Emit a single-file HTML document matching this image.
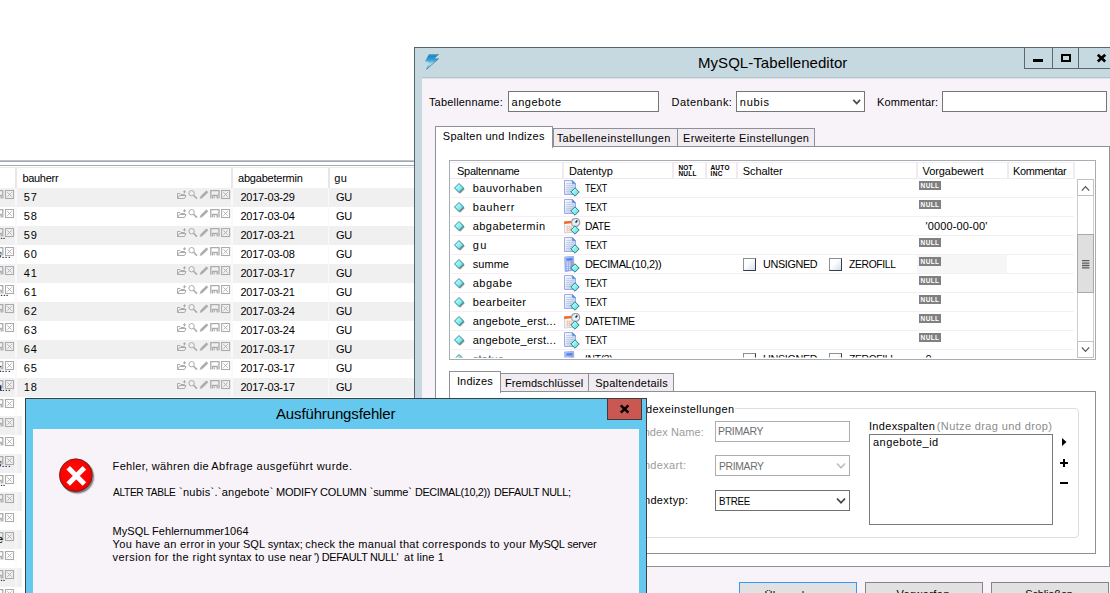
<!DOCTYPE html>
<html lang="de"><head><meta charset="utf-8"><title>MySQL-Tabelleneditor</title>
<style>
html,body{margin:0;padding:0}
body{width:1110px;height:593px;overflow:hidden;background:#fff;position:relative;font:11px "Liberation Sans",sans-serif;color:#000}
div,span,svg{position:absolute;box-sizing:border-box}
.layer{left:0;top:0;width:1110px;height:593px}
.t{white-space:pre;line-height:14px;transform-origin:0 50%;font-family:"Liberation Sans",sans-serif;font-size:11px}
.row{left:0;width:414px;height:18.5px;background:#f0f0f0}
.vsep{width:1.5px;background:#fbf7fa}
.win{background:#c7d9e0;border:1px solid #55646b}
.client{background:#f8f3f8}
.inp{background:#fff;border:1px solid #767676}
.tab{background:#f1ecf1;border:1px solid #8d9096;border-bottom:none}
.tab.act{background:#fff}
.hsep{width:2px;background:#f1ebf0;top:162px;height:17px}
.rsep{left:451px;width:623px;height:1px;background:#f6eef3}
.null{width:22px;height:9px;background:#808080;color:#fff;font-size:6.5px;font-weight:700;line-height:9px;text-align:center;letter-spacing:0.4px;font-family:"Liberation Sans",sans-serif}
.cb{width:13px;height:13px;border:1px solid #1c5180;border-top-color:#8e8f8f;border-left-color:#8e8f8f;border-right-color:#3c3c3c;border-bottom-color:#3c3c3c;background:linear-gradient(135deg,#fdfdfd 40%,#cfe0f4)}
.btn{background:#e1e1e1;border:1px solid #858585;height:20px}
</style></head>
<body>
<svg style="left:0;top:0" width="0" height="0"><defs><linearGradient id="dm" x1="0" y1="0" x2="1" y2="1"><stop offset="0" stop-color="#e4ffff"/><stop offset=".45" stop-color="#8ff3f6"/><stop offset="1" stop-color="#45d4e0"/></linearGradient><linearGradient id="dg" x1="0" y1="0" x2="1" y2="1"><stop offset="0" stop-color="#fbfcff"/><stop offset=".5" stop-color="#d5e4f6"/><stop offset="1" stop-color="#9cc0ea"/></linearGradient><linearGradient id="cg" x1="0" y1="0" x2="1" y2="1"><stop offset="0" stop-color="#bcd0fa"/><stop offset="1" stop-color="#6a8ce4"/></linearGradient><linearGradient id="lg" x1="0" y1="0" x2="0" y2="1"><stop offset="0" stop-color="#5fb0d8"/><stop offset=".12" stop-color="#1f86ba"/><stop offset=".4" stop-color="#3aa3d4"/><stop offset=".65" stop-color="#a6e3f7"/><stop offset="1" stop-color="#2d93c6"/></linearGradient><radialGradient id="rg" cx=".45" cy=".4" r=".62"><stop offset="0" stop-color="#ff0d08"/><stop offset=".85" stop-color="#f80000"/><stop offset="1" stop-color="#d80000"/></radialGradient></defs></svg>
<div class="layer" id="left">
<div style="left:0;top:160px;width:414px;height:1px;background:#bcc3cb"></div><div style="left:0;top:161px;width:414px;height:1px;background:#a2a9b2"></div><div style="left:0;top:165px;width:414px;height:1px;background:#a6acb4"></div><div style="left:0;top:167px;width:414px;height:1px;background:#ececec"></div><div style="left:15px;top:168px;width:2px;height:20px;background:#e8e4e8"></div><div style="left:231px;top:168px;width:2px;height:20px;background:#e8e4e8"></div><div style="left:327.5px;top:168px;width:2px;height:20px;background:#e8e4e8"></div><div style="left:0;top:187.5px;width:414px;height:1px;background:#e9e4e8"></div>
<div class="row" style="top:188.4px;width:414px"></div><div class="row" style="top:226.4px;width:414px"></div><div class="row" style="top:264.4px;width:414px"></div><div class="row" style="top:302.4px;width:414px"></div><div class="row" style="top:340.4px;width:414px"></div><div class="row" style="top:378.4px;width:414px"></div><div class="row" style="top:416.4px;width:21.5px"></div><div class="row" style="top:454.4px;width:21.5px"></div><div class="row" style="top:492.4px;width:21.5px"></div><div class="row" style="top:530.4px;width:21.5px"></div><div class="row" style="top:568.4px;width:21.5px"></div><div class="vsep" style="left:15px;top:188px;height:210px"></div><div class="vsep" style="left:231px;top:188px;height:210px"></div><div class="vsep" style="left:327.5px;top:188px;height:210px"></div><div class="vsep" style="left:15px;top:398px;height:195px;opacity:.5"></div>
<svg style="left:0;top:190.3px" width="16" height="10" viewBox="0 0 16 10" fill="none" stroke="#ababab" stroke-width="1"><path d="M-4.4 8.5V.5H2.8V8.5 M-2.6 8.5V5.5H1.2V8.5" stroke-width="1.3"/><rect x="5.5" y=".5" width="8" height="8" stroke-width="1.1"/><path d="M7.3 2.3L11.7 6.7M11.7 2.3L7.3 6.7" stroke-width=".9"/></svg><svg style="left:176.6px;top:190.3px" width="54" height="10" viewBox="0 0 54 10" fill="none" stroke="#ababab" stroke-width="1"><path d="M.5 8.5V3.5H3L4 4.5H7.5V5.5M.5 8.5L2.5 5.5H9L7.5 8.5Z M6 1.8H9 M7.5 .3V3.3"/><circle cx="14.6" cy="3.2" r="2.7"/><path d="M16.6 5.2L20 8.6" stroke-width="1.6"/><path d="M23 8.6L24 6L29.5 .8L31 2.3L25.6 7.6Z" fill="#ababab" stroke-width=".6"/><path d="M33.8 8.5V.5H42V8.5 M35.6 8.5V5.5H40.2V8.5 M37 7.5H38" stroke-width="1.3"/><rect x="44.6" y=".5" width="8" height="8" stroke-width="1.1"/><path d="M46.4 2.3L50.8 6.7M50.8 2.3L46.4 6.7" stroke-width=".9"/></svg>
<svg style="left:0;top:209.3px" width="16" height="10" viewBox="0 0 16 10" fill="none" stroke="#ababab" stroke-width="1"><path d="M-4.4 8.5V.5H2.8V8.5 M-2.6 8.5V5.5H1.2V8.5" stroke-width="1.3"/><rect x="5.5" y=".5" width="8" height="8" stroke-width="1.1"/><path d="M7.3 2.3L11.7 6.7M11.7 2.3L7.3 6.7" stroke-width=".9"/></svg><svg style="left:176.6px;top:209.3px" width="54" height="10" viewBox="0 0 54 10" fill="none" stroke="#ababab" stroke-width="1"><path d="M.5 8.5V3.5H3L4 4.5H7.5V5.5M.5 8.5L2.5 5.5H9L7.5 8.5Z M6 1.8H9 M7.5 .3V3.3"/><circle cx="14.6" cy="3.2" r="2.7"/><path d="M16.6 5.2L20 8.6" stroke-width="1.6"/><path d="M23 8.6L24 6L29.5 .8L31 2.3L25.6 7.6Z" fill="#ababab" stroke-width=".6"/><path d="M33.8 8.5V.5H42V8.5 M35.6 8.5V5.5H40.2V8.5 M37 7.5H38" stroke-width="1.3"/><rect x="44.6" y=".5" width="8" height="8" stroke-width="1.1"/><path d="M46.4 2.3L50.8 6.7M50.8 2.3L46.4 6.7" stroke-width=".9"/></svg>
<svg style="left:0;top:228.3px" width="16" height="10" viewBox="0 0 16 10" fill="none" stroke="#ababab" stroke-width="1"><path d="M-4.4 8.5V.5H2.8V8.5 M-2.6 8.5V5.5H1.2V8.5" stroke-width="1.3"/><rect x="5.5" y=".5" width="8" height="8" stroke-width="1.1"/><path d="M7.3 2.3L11.7 6.7M11.7 2.3L7.3 6.7" stroke-width=".9"/></svg><svg style="left:176.6px;top:228.3px" width="54" height="10" viewBox="0 0 54 10" fill="none" stroke="#ababab" stroke-width="1"><path d="M.5 8.5V3.5H3L4 4.5H7.5V5.5M.5 8.5L2.5 5.5H9L7.5 8.5Z M6 1.8H9 M7.5 .3V3.3"/><circle cx="14.6" cy="3.2" r="2.7"/><path d="M16.6 5.2L20 8.6" stroke-width="1.6"/><path d="M23 8.6L24 6L29.5 .8L31 2.3L25.6 7.6Z" fill="#ababab" stroke-width=".6"/><path d="M33.8 8.5V.5H42V8.5 M35.6 8.5V5.5H40.2V8.5 M37 7.5H38" stroke-width="1.3"/><rect x="44.6" y=".5" width="8" height="8" stroke-width="1.1"/><path d="M46.4 2.3L50.8 6.7M50.8 2.3L46.4 6.7" stroke-width=".9"/></svg>
<svg style="left:0;top:247.3px" width="16" height="10" viewBox="0 0 16 10" fill="none" stroke="#ababab" stroke-width="1"><path d="M-4.4 8.5V.5H2.8V8.5 M-2.6 8.5V5.5H1.2V8.5" stroke-width="1.3"/><rect x="5.5" y=".5" width="8" height="8" stroke-width="1.1"/><path d="M7.3 2.3L11.7 6.7M11.7 2.3L7.3 6.7" stroke-width=".9"/></svg><svg style="left:176.6px;top:247.3px" width="54" height="10" viewBox="0 0 54 10" fill="none" stroke="#ababab" stroke-width="1"><path d="M.5 8.5V3.5H3L4 4.5H7.5V5.5M.5 8.5L2.5 5.5H9L7.5 8.5Z M6 1.8H9 M7.5 .3V3.3"/><circle cx="14.6" cy="3.2" r="2.7"/><path d="M16.6 5.2L20 8.6" stroke-width="1.6"/><path d="M23 8.6L24 6L29.5 .8L31 2.3L25.6 7.6Z" fill="#ababab" stroke-width=".6"/><path d="M33.8 8.5V.5H42V8.5 M35.6 8.5V5.5H40.2V8.5 M37 7.5H38" stroke-width="1.3"/><rect x="44.6" y=".5" width="8" height="8" stroke-width="1.1"/><path d="M46.4 2.3L50.8 6.7M50.8 2.3L46.4 6.7" stroke-width=".9"/></svg>
<svg style="left:0;top:266.3px" width="16" height="10" viewBox="0 0 16 10" fill="none" stroke="#ababab" stroke-width="1"><path d="M-4.4 8.5V.5H2.8V8.5 M-2.6 8.5V5.5H1.2V8.5" stroke-width="1.3"/><rect x="5.5" y=".5" width="8" height="8" stroke-width="1.1"/><path d="M7.3 2.3L11.7 6.7M11.7 2.3L7.3 6.7" stroke-width=".9"/></svg><svg style="left:176.6px;top:266.3px" width="54" height="10" viewBox="0 0 54 10" fill="none" stroke="#ababab" stroke-width="1"><path d="M.5 8.5V3.5H3L4 4.5H7.5V5.5M.5 8.5L2.5 5.5H9L7.5 8.5Z M6 1.8H9 M7.5 .3V3.3"/><circle cx="14.6" cy="3.2" r="2.7"/><path d="M16.6 5.2L20 8.6" stroke-width="1.6"/><path d="M23 8.6L24 6L29.5 .8L31 2.3L25.6 7.6Z" fill="#ababab" stroke-width=".6"/><path d="M33.8 8.5V.5H42V8.5 M35.6 8.5V5.5H40.2V8.5 M37 7.5H38" stroke-width="1.3"/><rect x="44.6" y=".5" width="8" height="8" stroke-width="1.1"/><path d="M46.4 2.3L50.8 6.7M50.8 2.3L46.4 6.7" stroke-width=".9"/></svg>
<svg style="left:0;top:285.3px" width="16" height="10" viewBox="0 0 16 10" fill="none" stroke="#ababab" stroke-width="1"><path d="M-4.4 8.5V.5H2.8V8.5 M-2.6 8.5V5.5H1.2V8.5" stroke-width="1.3"/><rect x="5.5" y=".5" width="8" height="8" stroke-width="1.1"/><path d="M7.3 2.3L11.7 6.7M11.7 2.3L7.3 6.7" stroke-width=".9"/></svg><svg style="left:176.6px;top:285.3px" width="54" height="10" viewBox="0 0 54 10" fill="none" stroke="#ababab" stroke-width="1"><path d="M.5 8.5V3.5H3L4 4.5H7.5V5.5M.5 8.5L2.5 5.5H9L7.5 8.5Z M6 1.8H9 M7.5 .3V3.3"/><circle cx="14.6" cy="3.2" r="2.7"/><path d="M16.6 5.2L20 8.6" stroke-width="1.6"/><path d="M23 8.6L24 6L29.5 .8L31 2.3L25.6 7.6Z" fill="#ababab" stroke-width=".6"/><path d="M33.8 8.5V.5H42V8.5 M35.6 8.5V5.5H40.2V8.5 M37 7.5H38" stroke-width="1.3"/><rect x="44.6" y=".5" width="8" height="8" stroke-width="1.1"/><path d="M46.4 2.3L50.8 6.7M50.8 2.3L46.4 6.7" stroke-width=".9"/></svg>
<svg style="left:0;top:304.3px" width="16" height="10" viewBox="0 0 16 10" fill="none" stroke="#ababab" stroke-width="1"><path d="M-4.4 8.5V.5H2.8V8.5 M-2.6 8.5V5.5H1.2V8.5" stroke-width="1.3"/><rect x="5.5" y=".5" width="8" height="8" stroke-width="1.1"/><path d="M7.3 2.3L11.7 6.7M11.7 2.3L7.3 6.7" stroke-width=".9"/></svg><svg style="left:176.6px;top:304.3px" width="54" height="10" viewBox="0 0 54 10" fill="none" stroke="#ababab" stroke-width="1"><path d="M.5 8.5V3.5H3L4 4.5H7.5V5.5M.5 8.5L2.5 5.5H9L7.5 8.5Z M6 1.8H9 M7.5 .3V3.3"/><circle cx="14.6" cy="3.2" r="2.7"/><path d="M16.6 5.2L20 8.6" stroke-width="1.6"/><path d="M23 8.6L24 6L29.5 .8L31 2.3L25.6 7.6Z" fill="#ababab" stroke-width=".6"/><path d="M33.8 8.5V.5H42V8.5 M35.6 8.5V5.5H40.2V8.5 M37 7.5H38" stroke-width="1.3"/><rect x="44.6" y=".5" width="8" height="8" stroke-width="1.1"/><path d="M46.4 2.3L50.8 6.7M50.8 2.3L46.4 6.7" stroke-width=".9"/></svg>
<svg style="left:0;top:323.3px" width="16" height="10" viewBox="0 0 16 10" fill="none" stroke="#ababab" stroke-width="1"><path d="M-4.4 8.5V.5H2.8V8.5 M-2.6 8.5V5.5H1.2V8.5" stroke-width="1.3"/><rect x="5.5" y=".5" width="8" height="8" stroke-width="1.1"/><path d="M7.3 2.3L11.7 6.7M11.7 2.3L7.3 6.7" stroke-width=".9"/></svg><svg style="left:176.6px;top:323.3px" width="54" height="10" viewBox="0 0 54 10" fill="none" stroke="#ababab" stroke-width="1"><path d="M.5 8.5V3.5H3L4 4.5H7.5V5.5M.5 8.5L2.5 5.5H9L7.5 8.5Z M6 1.8H9 M7.5 .3V3.3"/><circle cx="14.6" cy="3.2" r="2.7"/><path d="M16.6 5.2L20 8.6" stroke-width="1.6"/><path d="M23 8.6L24 6L29.5 .8L31 2.3L25.6 7.6Z" fill="#ababab" stroke-width=".6"/><path d="M33.8 8.5V.5H42V8.5 M35.6 8.5V5.5H40.2V8.5 M37 7.5H38" stroke-width="1.3"/><rect x="44.6" y=".5" width="8" height="8" stroke-width="1.1"/><path d="M46.4 2.3L50.8 6.7M50.8 2.3L46.4 6.7" stroke-width=".9"/></svg>
<svg style="left:0;top:342.3px" width="16" height="10" viewBox="0 0 16 10" fill="none" stroke="#ababab" stroke-width="1"><path d="M-4.4 8.5V.5H2.8V8.5 M-2.6 8.5V5.5H1.2V8.5" stroke-width="1.3"/><rect x="5.5" y=".5" width="8" height="8" stroke-width="1.1"/><path d="M7.3 2.3L11.7 6.7M11.7 2.3L7.3 6.7" stroke-width=".9"/></svg><svg style="left:176.6px;top:342.3px" width="54" height="10" viewBox="0 0 54 10" fill="none" stroke="#ababab" stroke-width="1"><path d="M.5 8.5V3.5H3L4 4.5H7.5V5.5M.5 8.5L2.5 5.5H9L7.5 8.5Z M6 1.8H9 M7.5 .3V3.3"/><circle cx="14.6" cy="3.2" r="2.7"/><path d="M16.6 5.2L20 8.6" stroke-width="1.6"/><path d="M23 8.6L24 6L29.5 .8L31 2.3L25.6 7.6Z" fill="#ababab" stroke-width=".6"/><path d="M33.8 8.5V.5H42V8.5 M35.6 8.5V5.5H40.2V8.5 M37 7.5H38" stroke-width="1.3"/><rect x="44.6" y=".5" width="8" height="8" stroke-width="1.1"/><path d="M46.4 2.3L50.8 6.7M50.8 2.3L46.4 6.7" stroke-width=".9"/></svg>
<svg style="left:0;top:361.3px" width="16" height="10" viewBox="0 0 16 10" fill="none" stroke="#ababab" stroke-width="1"><path d="M-4.4 8.5V.5H2.8V8.5 M-2.6 8.5V5.5H1.2V8.5" stroke-width="1.3"/><rect x="5.5" y=".5" width="8" height="8" stroke-width="1.1"/><path d="M7.3 2.3L11.7 6.7M11.7 2.3L7.3 6.7" stroke-width=".9"/></svg><svg style="left:176.6px;top:361.3px" width="54" height="10" viewBox="0 0 54 10" fill="none" stroke="#ababab" stroke-width="1"><path d="M.5 8.5V3.5H3L4 4.5H7.5V5.5M.5 8.5L2.5 5.5H9L7.5 8.5Z M6 1.8H9 M7.5 .3V3.3"/><circle cx="14.6" cy="3.2" r="2.7"/><path d="M16.6 5.2L20 8.6" stroke-width="1.6"/><path d="M23 8.6L24 6L29.5 .8L31 2.3L25.6 7.6Z" fill="#ababab" stroke-width=".6"/><path d="M33.8 8.5V.5H42V8.5 M35.6 8.5V5.5H40.2V8.5 M37 7.5H38" stroke-width="1.3"/><rect x="44.6" y=".5" width="8" height="8" stroke-width="1.1"/><path d="M46.4 2.3L50.8 6.7M50.8 2.3L46.4 6.7" stroke-width=".9"/></svg>
<svg style="left:0;top:380.3px" width="16" height="10" viewBox="0 0 16 10" fill="none" stroke="#ababab" stroke-width="1"><path d="M-4.4 8.5V.5H2.8V8.5 M-2.6 8.5V5.5H1.2V8.5" stroke-width="1.3"/><rect x="5.5" y=".5" width="8" height="8" stroke-width="1.1"/><path d="M7.3 2.3L11.7 6.7M11.7 2.3L7.3 6.7" stroke-width=".9"/></svg><svg style="left:176.6px;top:380.3px" width="54" height="10" viewBox="0 0 54 10" fill="none" stroke="#ababab" stroke-width="1"><path d="M.5 8.5V3.5H3L4 4.5H7.5V5.5M.5 8.5L2.5 5.5H9L7.5 8.5Z M6 1.8H9 M7.5 .3V3.3"/><circle cx="14.6" cy="3.2" r="2.7"/><path d="M16.6 5.2L20 8.6" stroke-width="1.6"/><path d="M23 8.6L24 6L29.5 .8L31 2.3L25.6 7.6Z" fill="#ababab" stroke-width=".6"/><path d="M33.8 8.5V.5H42V8.5 M35.6 8.5V5.5H40.2V8.5 M37 7.5H38" stroke-width="1.3"/><rect x="44.6" y=".5" width="8" height="8" stroke-width="1.1"/><path d="M46.4 2.3L50.8 6.7M50.8 2.3L46.4 6.7" stroke-width=".9"/></svg>
<svg style="left:0;top:399.3px" width="16" height="10" viewBox="0 0 16 10" fill="none" stroke="#ababab" stroke-width="1"><path d="M-4.4 8.5V.5H2.8V8.5 M-2.6 8.5V5.5H1.2V8.5" stroke-width="1.3"/><rect x="5.5" y=".5" width="8" height="8" stroke-width="1.1"/><path d="M7.3 2.3L11.7 6.7M11.7 2.3L7.3 6.7" stroke-width=".9"/></svg>
<svg style="left:0;top:418.3px" width="16" height="10" viewBox="0 0 16 10" fill="none" stroke="#ababab" stroke-width="1"><path d="M-4.4 8.5V.5H2.8V8.5 M-2.6 8.5V5.5H1.2V8.5" stroke-width="1.3"/><rect x="5.5" y=".5" width="8" height="8" stroke-width="1.1"/><path d="M7.3 2.3L11.7 6.7M11.7 2.3L7.3 6.7" stroke-width=".9"/></svg>
<svg style="left:0;top:437.3px" width="16" height="10" viewBox="0 0 16 10" fill="none" stroke="#ababab" stroke-width="1"><path d="M-4.4 8.5V.5H2.8V8.5 M-2.6 8.5V5.5H1.2V8.5" stroke-width="1.3"/><rect x="5.5" y=".5" width="8" height="8" stroke-width="1.1"/><path d="M7.3 2.3L11.7 6.7M11.7 2.3L7.3 6.7" stroke-width=".9"/></svg>
<svg style="left:0;top:456.3px" width="16" height="10" viewBox="0 0 16 10" fill="none" stroke="#ababab" stroke-width="1"><path d="M-4.4 8.5V.5H2.8V8.5 M-2.6 8.5V5.5H1.2V8.5" stroke-width="1.3"/><rect x="5.5" y=".5" width="8" height="8" stroke-width="1.1"/><path d="M7.3 2.3L11.7 6.7M11.7 2.3L7.3 6.7" stroke-width=".9"/></svg>
<svg style="left:0;top:475.3px" width="16" height="10" viewBox="0 0 16 10" fill="none" stroke="#ababab" stroke-width="1"><path d="M-4.4 8.5V.5H2.8V8.5 M-2.6 8.5V5.5H1.2V8.5" stroke-width="1.3"/><rect x="5.5" y=".5" width="8" height="8" stroke-width="1.1"/><path d="M7.3 2.3L11.7 6.7M11.7 2.3L7.3 6.7" stroke-width=".9"/></svg>
<svg style="left:0;top:494.3px" width="16" height="10" viewBox="0 0 16 10" fill="none" stroke="#ababab" stroke-width="1"><path d="M-4.4 8.5V.5H2.8V8.5 M-2.6 8.5V5.5H1.2V8.5" stroke-width="1.3"/><rect x="5.5" y=".5" width="8" height="8" stroke-width="1.1"/><path d="M7.3 2.3L11.7 6.7M11.7 2.3L7.3 6.7" stroke-width=".9"/></svg>
<svg style="left:0;top:513.3px" width="16" height="10" viewBox="0 0 16 10" fill="none" stroke="#ababab" stroke-width="1"><path d="M-4.4 8.5V.5H2.8V8.5 M-2.6 8.5V5.5H1.2V8.5" stroke-width="1.3"/><rect x="5.5" y=".5" width="8" height="8" stroke-width="1.1"/><path d="M7.3 2.3L11.7 6.7M11.7 2.3L7.3 6.7" stroke-width=".9"/></svg>
<svg style="left:0;top:532.3px" width="16" height="10" viewBox="0 0 16 10" fill="none" stroke="#ababab" stroke-width="1"><path d="M-4.4 8.5V.5H2.8V8.5 M-2.6 8.5V5.5H1.2V8.5" stroke-width="1.3"/><rect x="5.5" y=".5" width="8" height="8" stroke-width="1.1"/><path d="M7.3 2.3L11.7 6.7M11.7 2.3L7.3 6.7" stroke-width=".9"/></svg>
<svg style="left:0;top:551.3px" width="16" height="10" viewBox="0 0 16 10" fill="none" stroke="#ababab" stroke-width="1"><path d="M-4.4 8.5V.5H2.8V8.5 M-2.6 8.5V5.5H1.2V8.5" stroke-width="1.3"/><rect x="5.5" y=".5" width="8" height="8" stroke-width="1.1"/><path d="M7.3 2.3L11.7 6.7M11.7 2.3L7.3 6.7" stroke-width=".9"/></svg>
<svg style="left:0;top:570.3px" width="16" height="10" viewBox="0 0 16 10" fill="none" stroke="#ababab" stroke-width="1"><path d="M-4.4 8.5V.5H2.8V8.5 M-2.6 8.5V5.5H1.2V8.5" stroke-width="1.3"/><rect x="5.5" y=".5" width="8" height="8" stroke-width="1.1"/><path d="M7.3 2.3L11.7 6.7M11.7 2.3L7.3 6.7" stroke-width=".9"/></svg>
<svg style="left:0;top:589.3px" width="16" height="10" viewBox="0 0 16 10" fill="none" stroke="#ababab" stroke-width="1"><path d="M-4.4 8.5V.5H2.8V8.5 M-2.6 8.5V5.5H1.2V8.5" stroke-width="1.3"/><rect x="5.5" y=".5" width="8" height="8" stroke-width="1.1"/><path d="M7.3 2.3L11.7 6.7M11.7 2.3L7.3 6.7" stroke-width=".9"/></svg>
<span class="t" style="left:22.4px;top:171.0px;letter-spacing:-0.29px">bauherr</span><span class="t" style="left:238.1px;top:171.0px;letter-spacing:-0.23px">abgabetermin</span><span class="t" style="left:334.3px;top:171.0px;letter-spacing:0.45px">gu</span><span class="t" style="left:23.8px;top:190.0px;letter-spacing:0.85px">57</span><span class="t" style="left:240.4px;top:190.0px;letter-spacing:-0.21px">2017-03-29</span><span class="t" style="left:335.9px;top:190.0px;letter-spacing:-0.30px">GU</span><span class="t" style="left:23.8px;top:209.0px;letter-spacing:0.85px">58</span><span class="t" style="left:240.4px;top:209.0px;letter-spacing:-0.21px">2017-03-04</span><span class="t" style="left:335.9px;top:209.0px;letter-spacing:-0.30px">GU</span><span class="t" style="left:23.8px;top:228.0px;letter-spacing:0.85px">59</span><span class="t" style="left:240.4px;top:228.0px;letter-spacing:-0.21px">2017-03-21</span><span class="t" style="left:335.9px;top:228.0px;letter-spacing:-0.30px">GU</span><span class="t" style="left:23.8px;top:247.0px;letter-spacing:0.85px">60</span><span class="t" style="left:240.4px;top:247.0px;letter-spacing:-0.21px">2017-03-08</span><span class="t" style="left:335.9px;top:247.0px;letter-spacing:-0.30px">GU</span><span class="t" style="left:23.8px;top:266.0px;letter-spacing:0.85px">41</span><span class="t" style="left:240.4px;top:266.0px;letter-spacing:-0.21px">2017-03-17</span><span class="t" style="left:335.9px;top:266.0px;letter-spacing:-0.30px">GU</span><span class="t" style="left:23.8px;top:285.0px;letter-spacing:0.85px">61</span><span class="t" style="left:240.4px;top:285.0px;letter-spacing:-0.21px">2017-03-21</span><span class="t" style="left:335.9px;top:285.0px;letter-spacing:-0.30px">GU</span><span class="t" style="left:23.8px;top:304.0px;letter-spacing:0.85px">62</span><span class="t" style="left:240.4px;top:304.0px;letter-spacing:-0.21px">2017-03-24</span><span class="t" style="left:335.9px;top:304.0px;letter-spacing:-0.30px">GU</span><span class="t" style="left:23.8px;top:323.0px;letter-spacing:0.85px">63</span><span class="t" style="left:240.4px;top:323.0px;letter-spacing:-0.21px">2017-03-24</span><span class="t" style="left:335.9px;top:323.0px;letter-spacing:-0.30px">GU</span><span class="t" style="left:23.8px;top:342.0px;letter-spacing:0.85px">64</span><span class="t" style="left:240.4px;top:342.0px;letter-spacing:-0.21px">2017-03-17</span><span class="t" style="left:335.9px;top:342.0px;letter-spacing:-0.30px">GU</span><span class="t" style="left:23.8px;top:361.0px;letter-spacing:0.85px">65</span><span class="t" style="left:240.4px;top:361.0px;letter-spacing:-0.21px">2017-03-17</span><span class="t" style="left:335.9px;top:361.0px;letter-spacing:-0.30px">GU</span><span class="t" style="left:23.8px;top:380.0px;letter-spacing:0.85px">18</span><span class="t" style="left:240.4px;top:380.0px;letter-spacing:-0.21px">2017-03-17</span><span class="t" style="left:335.9px;top:380.0px;letter-spacing:-0.30px">GU</span><span class="t" style="left:0.0px;top:228.0px;letter-spacing:-0.35px;transform:scaleX(0.952)">..</span><span class="t" style="left:-4.2px;top:247.0px;letter-spacing:0.11px">s...</span><span class="t" style="left:0.0px;top:285.0px;letter-spacing:-0.34px">...</span><span class="t" style="left:-4.2px;top:361.0px;letter-spacing:0.11px">k...</span><span class="t" style="left:-4.2px;top:380.0px;letter-spacing:-0.10px">a...</span><span class="t" style="left:-4.2px;top:456.0px;letter-spacing:0.11px">s...</span><span class="t" style="left:0.0px;top:475.0px;letter-spacing:-0.35px;transform:scaleX(0.952)">..</span><span class="t" style="left:-3.0px;top:532.0px;letter-spacing:0.38px">e</span><span class="t" style="left:0.0px;top:570.0px;letter-spacing:-0.35px;transform:scaleX(0.952)">..</span>
</div>
<div class="layer" id="main">
<div class="win" style="left:414px;top:47px;width:720px;height:600px"></div><div class="client" style="left:422px;top:78px;width:700px;height:560px;border-top:1px solid #dde3e8"></div><div style="left:422px;top:77px;width:700px;height:1px;background:#b3c4cc"></div>
<svg style="left:424px;top:53px" width="17" height="18" viewBox="0 0 17 18"><path d="M5 1 L14.8 1 L10.3 5.2 L14.8 5.6 L2.2 16.6 L4.6 9 L1 8.6Z" fill="url(#lg)"/><path d="M14.8 1 L10.3 5.2 M14.8 5.6 L2.2 16.6" stroke="#34526e" stroke-width=".7" fill="none" opacity=".8"/></svg>
<div style="left:1024px;top:47px;width:29px;height:22px;border:1px solid #5c686e;background:#c7d9e0"></div><div style="left:1052px;top:47px;width:27px;height:22px;border:1px solid #5c686e;background:#c7d9e0"></div><div style="left:1078px;top:47px;width:50px;height:22px;border:1px solid #5c686e;background:#c7d9e0"></div><div style="left:1033px;top:59px;width:10px;height:3px;background:#000"></div><div style="left:1061px;top:54px;width:10px;height:8px;border:2px solid #000;border-top-width:2px"></div><svg style="left:1096px;top:53px" width="11" height="10" viewBox="0 0 11 10"><path d="M1.8 1.7L9.2 8.5M9.2 1.7L1.8 8.5" stroke="#000" stroke-width="2.7"/></svg>
<div class="inp" style="left:508px;top:91px;width:151px;height:21px"></div><div class="inp" style="left:736px;top:91px;width:129px;height:21px"></div><svg style="left:852px;top:98px" width="10" height="8" viewBox="0 0 10 8"><path d="M1.3 1.8L4.7 5.5L8.1 1.8" fill="none" stroke="#4a4a4a" stroke-width="1.7"/></svg><div class="inp" style="left:942px;top:91px;width:165px;height:21px"></div>
<div style="left:435px;top:146px;width:675px;height:421px;background:#fff;border:1px solid #8d9096"></div><div class="tab" style="left:553px;top:128px;width:125px;height:18px"></div><div class="tab" style="left:677px;top:128px;width:138px;height:18px"></div><div class="tab act" style="left:435px;top:126px;width:118px;height:22px"></div>
<div style="left:449px;top:160px;width:647px;height:200px;background:#fff;border:1px solid #a7abb3"></div><div style="left:450px;top:178px;width:624px;height:1px;background:#efe9ee"></div><div style="left:450px;top:162px;width:624px;height:1px;background:#f3eef2"></div><div class="hsep" style="left:562px"></div><div class="hsep" style="left:672px"></div><div class="hsep" style="left:704.5px"></div><div class="hsep" style="left:736px"></div><div class="hsep" style="left:916px"></div><div class="hsep" style="left:1006.5px"></div><div class="hsep" style="left:1073px"></div>
<div class="layer" id="grid" style="clip-path:inset(161px 33px 235.5px 450px)">
<div style="left:917px;top:255px;width:90px;height:18px;background:#f6f6f6"></div><svg style="left:453.2px;top:181.6px" width="13" height="13" viewBox="0 0 13 13"><path d="M7.3 2.5 L12 7.2 L7.3 11.9 L2.6 7.2Z" fill="#555" opacity=".28"/><path d="M7 2.7 L11.3 7 L7 11.3 L2.7 7Z" fill="#3a3a3a" opacity=".5"/><path d="M6 1.5 L10.5 6 L6 10.5 L1.5 6Z" fill="url(#dm)" stroke="#3c8791" stroke-width="1"/></svg><svg style="left:564px;top:180px" width="17" height="17" viewBox="0 0 17 17"><path d="M.5 .5 H8.3 L11.5 3.6 V14.5 H.5Z" fill="url(#dg)" stroke="#a4a9e6" stroke-width="1"/><path d="M8.2 .4 L11.7 3.8 H8.2Z" fill="#4d8fe6" stroke="#6f8fdc" stroke-width=".5"/><path d="M2.2 3.5H7M2.2 5.5H9.6M2.2 7.5H9.6M2.2 9.5H8M2.2 11.5H7" stroke="#b4bfd6" stroke-width="1" opacity=".6"/></svg><svg style="left:569.1px;top:185.5px" width="13" height="13" viewBox="0 0 13 13"><path d="M6 1.8 L10.2 6 L6 10.2 L1.8 6Z" fill="url(#dm)" stroke="#357c7e" stroke-width="1"/></svg><div class="null" style="left:919px;top:181px">NULL</div>
<div class="rsep" style="top:197px"></div><svg style="left:453.2px;top:200.6px" width="13" height="13" viewBox="0 0 13 13"><path d="M7.3 2.5 L12 7.2 L7.3 11.9 L2.6 7.2Z" fill="#555" opacity=".28"/><path d="M7 2.7 L11.3 7 L7 11.3 L2.7 7Z" fill="#3a3a3a" opacity=".5"/><path d="M6 1.5 L10.5 6 L6 10.5 L1.5 6Z" fill="url(#dm)" stroke="#3c8791" stroke-width="1"/></svg><svg style="left:564px;top:199px" width="17" height="17" viewBox="0 0 17 17"><path d="M.5 .5 H8.3 L11.5 3.6 V14.5 H.5Z" fill="url(#dg)" stroke="#a4a9e6" stroke-width="1"/><path d="M8.2 .4 L11.7 3.8 H8.2Z" fill="#4d8fe6" stroke="#6f8fdc" stroke-width=".5"/><path d="M2.2 3.5H7M2.2 5.5H9.6M2.2 7.5H9.6M2.2 9.5H8M2.2 11.5H7" stroke="#b4bfd6" stroke-width="1" opacity=".6"/></svg><svg style="left:569.1px;top:204.5px" width="13" height="13" viewBox="0 0 13 13"><path d="M6 1.8 L10.2 6 L6 10.2 L1.8 6Z" fill="url(#dm)" stroke="#357c7e" stroke-width="1"/></svg><div class="null" style="left:919px;top:200px">NULL</div>
<div class="rsep" style="top:216px"></div><svg style="left:453.2px;top:219.6px" width="13" height="13" viewBox="0 0 13 13"><path d="M7.3 2.5 L12 7.2 L7.3 11.9 L2.6 7.2Z" fill="#555" opacity=".28"/><path d="M7 2.7 L11.3 7 L7 11.3 L2.7 7Z" fill="#3a3a3a" opacity=".5"/><path d="M6 1.5 L10.5 6 L6 10.5 L1.5 6Z" fill="url(#dm)" stroke="#3c8791" stroke-width="1"/></svg><svg style="left:564px;top:218px" width="17" height="17" viewBox="0 0 17 17"><path d="M.4 3.6 L9 3 L9.6 14.2 L.8 15Z" fill="#f3f7fd" stroke="#c3cbd8" stroke-width=".9"/><path d="M.2 3.6 L7 2.9 L7 5.3 L.3 6Z" fill="#f4661a"/><path d="M2.4 8.6H8M2.4 10.6H8M2.4 12.6H8M3.4 7.4V13.6M5.4 7.4V13.6M7.4 7.4V13.6" stroke="#f6c3a6" stroke-width=".9"/><circle cx="11.6" cy="4.4" r="4.1" fill="#e3eef8" stroke="#9a9ea6" stroke-width="1.2"/><path d="M11.6 4.6 L13.3 2.6" stroke="#23272e" stroke-width="1.5"/></svg><svg style="left:569.1px;top:223.5px" width="13" height="13" viewBox="0 0 13 13"><path d="M6 1.8 L10.2 6 L6 10.2 L1.8 6Z" fill="url(#dm)" stroke="#357c7e" stroke-width="1"/></svg>
<div class="rsep" style="top:235px"></div><svg style="left:453.2px;top:238.6px" width="13" height="13" viewBox="0 0 13 13"><path d="M7.3 2.5 L12 7.2 L7.3 11.9 L2.6 7.2Z" fill="#555" opacity=".28"/><path d="M7 2.7 L11.3 7 L7 11.3 L2.7 7Z" fill="#3a3a3a" opacity=".5"/><path d="M6 1.5 L10.5 6 L6 10.5 L1.5 6Z" fill="url(#dm)" stroke="#3c8791" stroke-width="1"/></svg><svg style="left:564px;top:237px" width="17" height="17" viewBox="0 0 17 17"><path d="M.5 .5 H8.3 L11.5 3.6 V14.5 H.5Z" fill="url(#dg)" stroke="#a4a9e6" stroke-width="1"/><path d="M8.2 .4 L11.7 3.8 H8.2Z" fill="#4d8fe6" stroke="#6f8fdc" stroke-width=".5"/><path d="M2.2 3.5H7M2.2 5.5H9.6M2.2 7.5H9.6M2.2 9.5H8M2.2 11.5H7" stroke="#b4bfd6" stroke-width="1" opacity=".6"/></svg><svg style="left:569.1px;top:242.5px" width="13" height="13" viewBox="0 0 13 13"><path d="M6 1.8 L10.2 6 L6 10.2 L1.8 6Z" fill="url(#dm)" stroke="#357c7e" stroke-width="1"/></svg><div class="null" style="left:919px;top:238px">NULL</div>
<div class="rsep" style="top:254px"></div><svg style="left:453.2px;top:257.6px" width="13" height="13" viewBox="0 0 13 13"><path d="M7.3 2.5 L12 7.2 L7.3 11.9 L2.6 7.2Z" fill="#555" opacity=".28"/><path d="M7 2.7 L11.3 7 L7 11.3 L2.7 7Z" fill="#3a3a3a" opacity=".5"/><path d="M6 1.5 L10.5 6 L6 10.5 L1.5 6Z" fill="url(#dm)" stroke="#3c8791" stroke-width="1"/></svg><svg style="left:564px;top:256px" width="17" height="17" viewBox="0 0 17 17"><path d="M.6 1 L9.6 .4 L9.9 14.2 L1.2 15.6Z" fill="url(#cg)" stroke="#8ea4e8" stroke-width=".8"/><path d="M2.3 2.6 L8.4 2.2 L8.4 4.2 L2.4 4.6Z" fill="#4d7be8"/><path d="M2.8 7H4.2M5 7H6.4M2.8 9.2H4.2M5 9.2H6.4M2.8 11.4H4.2M5 11.4H6.4M2.8 13.4H4.2M5 13.4H6.4" stroke="#dfe9fc" stroke-width="1.2"/><rect x="6.9" y="6" width="1.8" height="1.8" fill="#f08a48"/></svg><svg style="left:569.1px;top:261.5px" width="13" height="13" viewBox="0 0 13 13"><path d="M6 1.8 L10.2 6 L6 10.2 L1.8 6Z" fill="url(#dm)" stroke="#357c7e" stroke-width="1"/></svg><div class="null" style="left:919px;top:257px">NULL</div><div class="cb" style="left:743px;top:258px"></div><div class="cb" style="left:829px;top:258px"></div>
<div class="rsep" style="top:273px"></div><svg style="left:453.2px;top:276.6px" width="13" height="13" viewBox="0 0 13 13"><path d="M7.3 2.5 L12 7.2 L7.3 11.9 L2.6 7.2Z" fill="#555" opacity=".28"/><path d="M7 2.7 L11.3 7 L7 11.3 L2.7 7Z" fill="#3a3a3a" opacity=".5"/><path d="M6 1.5 L10.5 6 L6 10.5 L1.5 6Z" fill="url(#dm)" stroke="#3c8791" stroke-width="1"/></svg><svg style="left:564px;top:275px" width="17" height="17" viewBox="0 0 17 17"><path d="M.5 .5 H8.3 L11.5 3.6 V14.5 H.5Z" fill="url(#dg)" stroke="#a4a9e6" stroke-width="1"/><path d="M8.2 .4 L11.7 3.8 H8.2Z" fill="#4d8fe6" stroke="#6f8fdc" stroke-width=".5"/><path d="M2.2 3.5H7M2.2 5.5H9.6M2.2 7.5H9.6M2.2 9.5H8M2.2 11.5H7" stroke="#b4bfd6" stroke-width="1" opacity=".6"/></svg><svg style="left:569.1px;top:280.5px" width="13" height="13" viewBox="0 0 13 13"><path d="M6 1.8 L10.2 6 L6 10.2 L1.8 6Z" fill="url(#dm)" stroke="#357c7e" stroke-width="1"/></svg><div class="null" style="left:919px;top:276px">NULL</div>
<div class="rsep" style="top:292px"></div><svg style="left:453.2px;top:295.6px" width="13" height="13" viewBox="0 0 13 13"><path d="M7.3 2.5 L12 7.2 L7.3 11.9 L2.6 7.2Z" fill="#555" opacity=".28"/><path d="M7 2.7 L11.3 7 L7 11.3 L2.7 7Z" fill="#3a3a3a" opacity=".5"/><path d="M6 1.5 L10.5 6 L6 10.5 L1.5 6Z" fill="url(#dm)" stroke="#3c8791" stroke-width="1"/></svg><svg style="left:564px;top:294px" width="17" height="17" viewBox="0 0 17 17"><path d="M.5 .5 H8.3 L11.5 3.6 V14.5 H.5Z" fill="url(#dg)" stroke="#a4a9e6" stroke-width="1"/><path d="M8.2 .4 L11.7 3.8 H8.2Z" fill="#4d8fe6" stroke="#6f8fdc" stroke-width=".5"/><path d="M2.2 3.5H7M2.2 5.5H9.6M2.2 7.5H9.6M2.2 9.5H8M2.2 11.5H7" stroke="#b4bfd6" stroke-width="1" opacity=".6"/></svg><svg style="left:569.1px;top:299.5px" width="13" height="13" viewBox="0 0 13 13"><path d="M6 1.8 L10.2 6 L6 10.2 L1.8 6Z" fill="url(#dm)" stroke="#357c7e" stroke-width="1"/></svg><div class="null" style="left:919px;top:295px">NULL</div>
<div class="rsep" style="top:311px"></div><svg style="left:453.2px;top:314.6px" width="13" height="13" viewBox="0 0 13 13"><path d="M7.3 2.5 L12 7.2 L7.3 11.9 L2.6 7.2Z" fill="#555" opacity=".28"/><path d="M7 2.7 L11.3 7 L7 11.3 L2.7 7Z" fill="#3a3a3a" opacity=".5"/><path d="M6 1.5 L10.5 6 L6 10.5 L1.5 6Z" fill="url(#dm)" stroke="#3c8791" stroke-width="1"/></svg><svg style="left:564px;top:313px" width="17" height="17" viewBox="0 0 17 17"><path d="M.4 3.6 L9 3 L9.6 14.2 L.8 15Z" fill="#f3f7fd" stroke="#c3cbd8" stroke-width=".9"/><path d="M.2 3.6 L7 2.9 L7 5.3 L.3 6Z" fill="#f4661a"/><path d="M2.4 8.6H8M2.4 10.6H8M2.4 12.6H8M3.4 7.4V13.6M5.4 7.4V13.6M7.4 7.4V13.6" stroke="#f6c3a6" stroke-width=".9"/><circle cx="11.6" cy="4.4" r="4.1" fill="#e3eef8" stroke="#9a9ea6" stroke-width="1.2"/><path d="M11.6 4.6 L13.3 2.6" stroke="#23272e" stroke-width="1.5"/></svg><svg style="left:569.1px;top:318.5px" width="13" height="13" viewBox="0 0 13 13"><path d="M6 1.8 L10.2 6 L6 10.2 L1.8 6Z" fill="url(#dm)" stroke="#357c7e" stroke-width="1"/></svg><div class="null" style="left:919px;top:314px">NULL</div>
<div class="rsep" style="top:330px"></div><svg style="left:453.2px;top:333.6px" width="13" height="13" viewBox="0 0 13 13"><path d="M7.3 2.5 L12 7.2 L7.3 11.9 L2.6 7.2Z" fill="#555" opacity=".28"/><path d="M7 2.7 L11.3 7 L7 11.3 L2.7 7Z" fill="#3a3a3a" opacity=".5"/><path d="M6 1.5 L10.5 6 L6 10.5 L1.5 6Z" fill="url(#dm)" stroke="#3c8791" stroke-width="1"/></svg><svg style="left:564px;top:332px" width="17" height="17" viewBox="0 0 17 17"><path d="M.5 .5 H8.3 L11.5 3.6 V14.5 H.5Z" fill="url(#dg)" stroke="#a4a9e6" stroke-width="1"/><path d="M8.2 .4 L11.7 3.8 H8.2Z" fill="#4d8fe6" stroke="#6f8fdc" stroke-width=".5"/><path d="M2.2 3.5H7M2.2 5.5H9.6M2.2 7.5H9.6M2.2 9.5H8M2.2 11.5H7" stroke="#b4bfd6" stroke-width="1" opacity=".6"/></svg><svg style="left:569.1px;top:337.5px" width="13" height="13" viewBox="0 0 13 13"><path d="M6 1.8 L10.2 6 L6 10.2 L1.8 6Z" fill="url(#dm)" stroke="#357c7e" stroke-width="1"/></svg><div class="null" style="left:919px;top:333px">NULL</div>
<div class="rsep" style="top:349px"></div><svg style="left:453.2px;top:352.6px" width="13" height="13" viewBox="0 0 13 13"><path d="M7.3 2.5 L12 7.2 L7.3 11.9 L2.6 7.2Z" fill="#555" opacity=".28"/><path d="M7 2.7 L11.3 7 L7 11.3 L2.7 7Z" fill="#3a3a3a" opacity=".5"/><path d="M6 1.5 L10.5 6 L6 10.5 L1.5 6Z" fill="url(#dm)" stroke="#3c8791" stroke-width="1"/></svg><svg style="left:564px;top:351px" width="17" height="17" viewBox="0 0 17 17"><path d="M.6 1 L9.6 .4 L9.9 14.2 L1.2 15.6Z" fill="url(#cg)" stroke="#8ea4e8" stroke-width=".8"/><path d="M2.3 2.6 L8.4 2.2 L8.4 4.2 L2.4 4.6Z" fill="#4d7be8"/><path d="M2.8 7H4.2M5 7H6.4M2.8 9.2H4.2M5 9.2H6.4M2.8 11.4H4.2M5 11.4H6.4M2.8 13.4H4.2M5 13.4H6.4" stroke="#dfe9fc" stroke-width="1.2"/><rect x="6.9" y="6" width="1.8" height="1.8" fill="#f08a48"/></svg><svg style="left:569.1px;top:356.5px" width="13" height="13" viewBox="0 0 13 13"><path d="M6 1.8 L10.2 6 L6 10.2 L1.8 6Z" fill="url(#dm)" stroke="#357c7e" stroke-width="1"/></svg><div class="cb" style="left:743px;top:353px"></div><div class="cb" style="left:829px;top:353px"></div>
<span class="t" style="left:472.7px;top:181.0px;letter-spacing:0.51px">bauvorhaben</span><span class="t" style="left:584.9px;top:181.0px;letter-spacing:-0.35px;transform:scaleX(0.820)">TEXT</span><span class="t" style="left:472.7px;top:200.0px;letter-spacing:0.65px">bauherr</span><span class="t" style="left:584.9px;top:200.0px;letter-spacing:-0.35px;transform:scaleX(0.820)">TEXT</span><span class="t" style="left:472.7px;top:219.0px;letter-spacing:0.46px">abgabetermin</span><span class="t" style="left:584.9px;top:219.0px;letter-spacing:-0.35px;transform:scaleX(0.932)">DATE</span><span class="t" style="left:925.5px;top:218.5px;letter-spacing:0.12px">'0000-00-00'</span><span class="t" style="left:472.7px;top:238.0px;letter-spacing:1.55px">gu</span><span class="t" style="left:584.9px;top:238.0px;letter-spacing:-0.35px;transform:scaleX(0.820)">TEXT</span><span class="t" style="left:472.7px;top:257.0px;letter-spacing:0.06px">summe</span><span class="t" style="left:584.9px;top:257.0px;letter-spacing:-0.35px;transform:scaleX(0.998)">DECIMAL(10,2))</span><span class="t" style="left:763.0px;top:257.0px;letter-spacing:-0.35px;transform:scaleX(0.982)">UNSIGNED</span><span class="t" style="left:849.0px;top:257.0px;letter-spacing:-0.35px;transform:scaleX(0.938)">ZEROFILL</span><span class="t" style="left:472.7px;top:276.0px;letter-spacing:0.52px">abgabe</span><span class="t" style="left:584.9px;top:276.0px;letter-spacing:-0.35px;transform:scaleX(0.820)">TEXT</span><span class="t" style="left:472.7px;top:295.0px;letter-spacing:0.42px">bearbeiter</span><span class="t" style="left:584.9px;top:295.0px;letter-spacing:-0.35px;transform:scaleX(0.820)">TEXT</span><span class="t" style="left:472.7px;top:314.0px;letter-spacing:0.25px">angebote_erst...</span><span class="t" style="left:584.9px;top:314.0px;letter-spacing:-0.35px;transform:scaleX(0.957)">DATETIME</span><span class="t" style="left:472.7px;top:333.0px;letter-spacing:0.25px">angebote_erst...</span><span class="t" style="left:584.9px;top:333.0px;letter-spacing:-0.35px;transform:scaleX(0.820)">TEXT</span><span class="t" style="left:472.7px;top:352.0px;letter-spacing:0.29px">status</span><span class="t" style="left:584.9px;top:352.0px;letter-spacing:-0.35px;transform:scaleX(0.938)">INT(3)</span><span class="t" style="left:925.5px;top:352.0px;letter-spacing:0.88px">0</span><span class="t" style="left:763.0px;top:352.0px;letter-spacing:-0.35px;transform:scaleX(0.982)">UNSIGNED</span><span class="t" style="left:849.0px;top:352.0px;letter-spacing:-0.35px;transform:scaleX(0.938)">ZEROFILL</span>
</div>
<div style="left:1077px;top:179px;width:17px;height:179px;background:#fff;border-left:1px solid #cfcfcf;border-right:1px solid #cfcfcf"></div><div style="left:1077px;top:179px;width:17px;height:17px;background:#fff;border:1px solid #c2c2c2"></div><div style="left:1077px;top:341px;width:17px;height:17px;background:#fff;border:1px solid #c2c2c2"></div><div style="left:1077px;top:234px;width:17px;height:59px;background:#dfdfdf;border:1px solid #a9a9a9"></div><svg style="left:1081px;top:185px" width="9" height="7" viewBox="0 0 9 7"><path d="M.8 5.6L4.5 1.6L8.2 5.6" fill="none" stroke="#555" stroke-width="1.2"/></svg><svg style="left:1081px;top:346px" width="9" height="7" viewBox="0 0 9 7"><path d="M.8 1.4L4.5 5.4L8.2 1.4" fill="none" stroke="#555" stroke-width="1.2"/></svg><svg style="left:1082px;top:259px" width="8" height="10" viewBox="0 0 8 10"><path d="M0 1.7H7.4M0 4.1H7.4M0 6.5H7.4M0 8.9H7.4" stroke="#5a5a5a" stroke-width="1.3"/></svg>
<div style="left:449px;top:391px;width:647px;height:163px;background:#fff;border:1px solid #8d9096"></div><div class="tab" style="left:500px;top:373px;width:89px;height:18px"></div><div class="tab" style="left:588px;top:373px;width:86px;height:18px"></div><div class="tab act" style="left:449px;top:371px;width:52px;height:22px"></div>
<div style="left:628px;top:408px;width:451px;height:130px;border:1px solid #d5dfe5;border-radius:4px"></div><div style="left:630px;top:404px;width:105px;height:10px;background:#fff"></div><div class="inp" style="left:715px;top:421px;width:135px;height:21px;border-color:#abadb3"></div><div class="inp" style="left:715px;top:455px;width:135px;height:21px;border-color:#abadb3"></div><svg style="left:836px;top:462px" width="10" height="8" viewBox="0 0 10 8"><path d="M1 1.5L5 5.8L9 1.5" fill="none" stroke="#bdbdbd" stroke-width="1.6"/></svg><div class="inp" style="left:715px;top:490px;width:135px;height:21px;border-color:#707070"></div><svg style="left:836px;top:497px" width="10" height="8" viewBox="0 0 10 8"><path d="M1 1.5L5 5.8L9 1.5" fill="none" stroke="#444" stroke-width="1.8"/></svg><div class="inp" style="left:869px;top:434px;width:184px;height:91px;border-color:#7a7a7a"></div><svg style="left:1062px;top:438px" width="5" height="8" viewBox="0 0 5 8"><path d="M0 0L4.5 4L0 8Z" fill="#000"/></svg><div style="left:1060px;top:462px;width:8px;height:2px;background:#000"></div><div style="left:1063px;top:459px;width:2px;height:8px;background:#000"></div><div style="left:1060px;top:482px;width:8px;height:2px;background:#000"></div>
<div class="btn" style="left:739px;top:582px;width:118px;border-color:#3399ff"></div><div class="btn" style="left:865px;top:582px;width:118px"></div><div class="btn" style="left:991px;top:582px;width:118px"></div>
<span class="t" style="left:698.0px;top:56.0px;letter-spacing:0.05px;font-size:15px">MySQL-Tabelleneditor</span><span class="t" style="left:428.9px;top:95.0px;letter-spacing:0.19px">Tabellenname:</span><span class="t" style="left:511.5px;top:95.0px;letter-spacing:0.52px">angebote</span><span class="t" style="left:671.5px;top:95.0px;letter-spacing:0.46px">Datenbank:</span><span class="t" style="left:739.8px;top:95.0px;letter-spacing:0.73px">nubis</span><span class="t" style="left:877.0px;top:95.0px;letter-spacing:0.13px">Kommentar:</span><span class="t" style="left:442.8px;top:129.0px;letter-spacing:0.28px">Spalten und Indizes</span><span class="t" style="left:556.7px;top:131.0px;letter-spacing:0.40px">Tabelleneinstellungen</span><span class="t" style="left:683.0px;top:131.0px;letter-spacing:0.32px">Erweiterte Einstellungen</span><span class="t" style="left:456.9px;top:164.0px;letter-spacing:-0.20px">Spaltenname</span><span class="t" style="left:568.9px;top:164.0px;letter-spacing:-0.02px">Datentyp</span><span class="t" style="left:742.7px;top:164.0px;letter-spacing:-0.04px">Schalter</span><span class="t" style="left:922.5px;top:164.0px;letter-spacing:-0.07px">Vorgabewert</span><span class="t" style="left:1013.0px;top:164.0px;letter-spacing:-0.35px;transform:scaleX(0.992)">Kommentar</span><span class="t" style="left:678.4px;top:161.0px;letter-spacing:0.18px;font-size:6.5px;font-weight:700">NOT</span><span class="t" style="left:678.4px;top:167.0px;letter-spacing:0.25px;font-size:6.5px;font-weight:700">NULL</span><span class="t" style="left:710.4px;top:161.0px;letter-spacing:0.26px;font-size:6.5px;font-weight:700">AUTO</span><span class="t" style="left:710.4px;top:167.0px;letter-spacing:0.45px;font-size:6.5px;font-weight:700">INC</span><span class="t" style="left:456.9px;top:374.0px;letter-spacing:0.17px">Indizes</span><span class="t" style="left:504.9px;top:376.0px;letter-spacing:0.09px">Fremdschlüssel</span><span class="t" style="left:595.2px;top:376.0px;letter-spacing:0.27px">Spaltendetails</span><span class="t" style="left:635.5px;top:402.0px;letter-spacing:0.81px">In</span><span class="t" style="left:645.9px;top:402.0px;letter-spacing:0.37px">dexeinstellungen</span><span class="t" style="left:640.5px;top:425.0px;letter-spacing:0.10px;color:#9c9c9c">Index Name:</span><span class="t" style="left:718.0px;top:424.0px;letter-spacing:-0.35px;transform:scaleX(0.949);color:#6d6d6d">PRIMARY</span><span class="t" style="left:640.5px;top:458.0px;letter-spacing:0.34px;color:#9c9c9c">Indexart:</span><span class="t" style="left:719.0px;top:458.5px;letter-spacing:-0.35px;transform:scaleX(0.941);color:#6d6d6d">PRIMARY</span><span class="t" style="left:640.5px;top:493.0px;letter-spacing:0.36px">Indextyp:</span><span class="t" style="left:719.0px;top:493.5px;letter-spacing:-0.35px;transform:scaleX(0.887)">BTREE</span><span class="t" style="left:869.0px;top:419.0px;letter-spacing:0.31px">Indexspalten</span><span class="t" style="left:936.8px;top:419.0px;letter-spacing:0.37px;color:#8c8c8c">(Nutze drag und drop)</span><span class="t" style="left:873.0px;top:435.0px;letter-spacing:0.46px">angebote_id</span><span class="t" style="left:764.6px;top:587.5px;letter-spacing:0.18px">Übernehmen</span><span class="t" style="left:896.4px;top:587.0px;letter-spacing:0.45px">Verwerfen</span><span class="t" style="left:1025.2px;top:587.0px;letter-spacing:-0.14px">Schließen</span>
</div>
<div class="layer" id="err">
<div style="left:25px;top:398px;width:622px;height:220px;background:#65c9ef;border:1px solid #3d3f40"></div><div class="client" style="left:33px;top:429px;width:606px;height:180px"></div><div style="left:607px;top:399px;width:35px;height:21px;background:#c95852;border:1px solid #43393a;border-top:none"></div><svg style="left:619px;top:404px" width="11" height="10" viewBox="0 0 11 10"><path d="M1.8 1.4L9.4 8.6M9.4 1.4L1.8 8.6" stroke="#000" stroke-width="2.6"/></svg><svg style="left:57px;top:456px" width="40" height="40" viewBox="0 0 40 40"><circle cx="20.6" cy="21.2" r="17.2" fill="#555" opacity=".22"/><circle cx="20" cy="20.5" r="16.8" fill="#333" opacity=".5"/><circle cx="18.8" cy="19.2" r="16.4" fill="url(#rg)" stroke="#5c2323" stroke-width=".8"/><path d="M11.2 11.8L27.4 28M27.4 11.8L11.2 28" stroke="#fff" stroke-width="5"/></svg>
<span class="t" style="left:276.0px;top:406.5px;letter-spacing:-0.14px;font-size:15px">Ausführungsfehler</span><span class="t" style="left:112.6px;top:459.0px;letter-spacing:0.32px">Fehler, währen die</span><span class="t" style="left:211.3px;top:459.0px;letter-spacing:0.46px">Abfrage ausgeführt wurde.</span><span class="t" style="left:112.6px;top:485.0px;letter-spacing:-0.35px;transform:scaleX(0.923)">ALTER TABLE</span><span class="t" style="left:179.0px;top:485.0px;letter-spacing:0.26px">`nubis`.`angebote`</span><span class="t" style="left:276.1px;top:485.0px;letter-spacing:-0.23px">MODIFY COLUMN</span><span class="t" style="left:369.8px;top:485.0px;letter-spacing:-0.22px">`summe`</span><span class="t" style="left:415.2px;top:485.0px;letter-spacing:-0.35px;transform:scaleX(0.982)">DECIMAL(10,2))</span><span class="t" style="left:493.9px;top:485.0px;letter-spacing:-0.35px;transform:scaleX(0.979)">DEFAULT NULL;</span><span class="t" style="left:112.6px;top:524.0px;letter-spacing:0.03px">MySQL Fehlernummer1064</span><span class="t" style="left:112.6px;top:537.0px;letter-spacing:0.30px">You have an error</span><span class="t" style="left:206.7px;top:537.0px;letter-spacing:0.03px">in your SQL syntax;</span><span class="t" style="left:305.2px;top:537.0px;letter-spacing:0.30px">check the manual that</span><span class="t" style="left:422.2px;top:537.0px;letter-spacing:0.36px">corresponds to your</span><span class="t" style="left:529.2px;top:537.0px;letter-spacing:-0.23px">MySQL server</span><span class="t" style="left:112.6px;top:550.0px;letter-spacing:0.45px">version for the right</span><span class="t" style="left:218.8px;top:550.0px;letter-spacing:0.18px">syntax to use near</span><span class="t" style="left:314.1px;top:550.0px;letter-spacing:-0.35px;transform:scaleX(0.990)">') DEFAULT NULL'</span><span class="t" style="left:404.1px;top:550.0px;letter-spacing:0.17px">at line 1</span>
</div>
</body></html>
